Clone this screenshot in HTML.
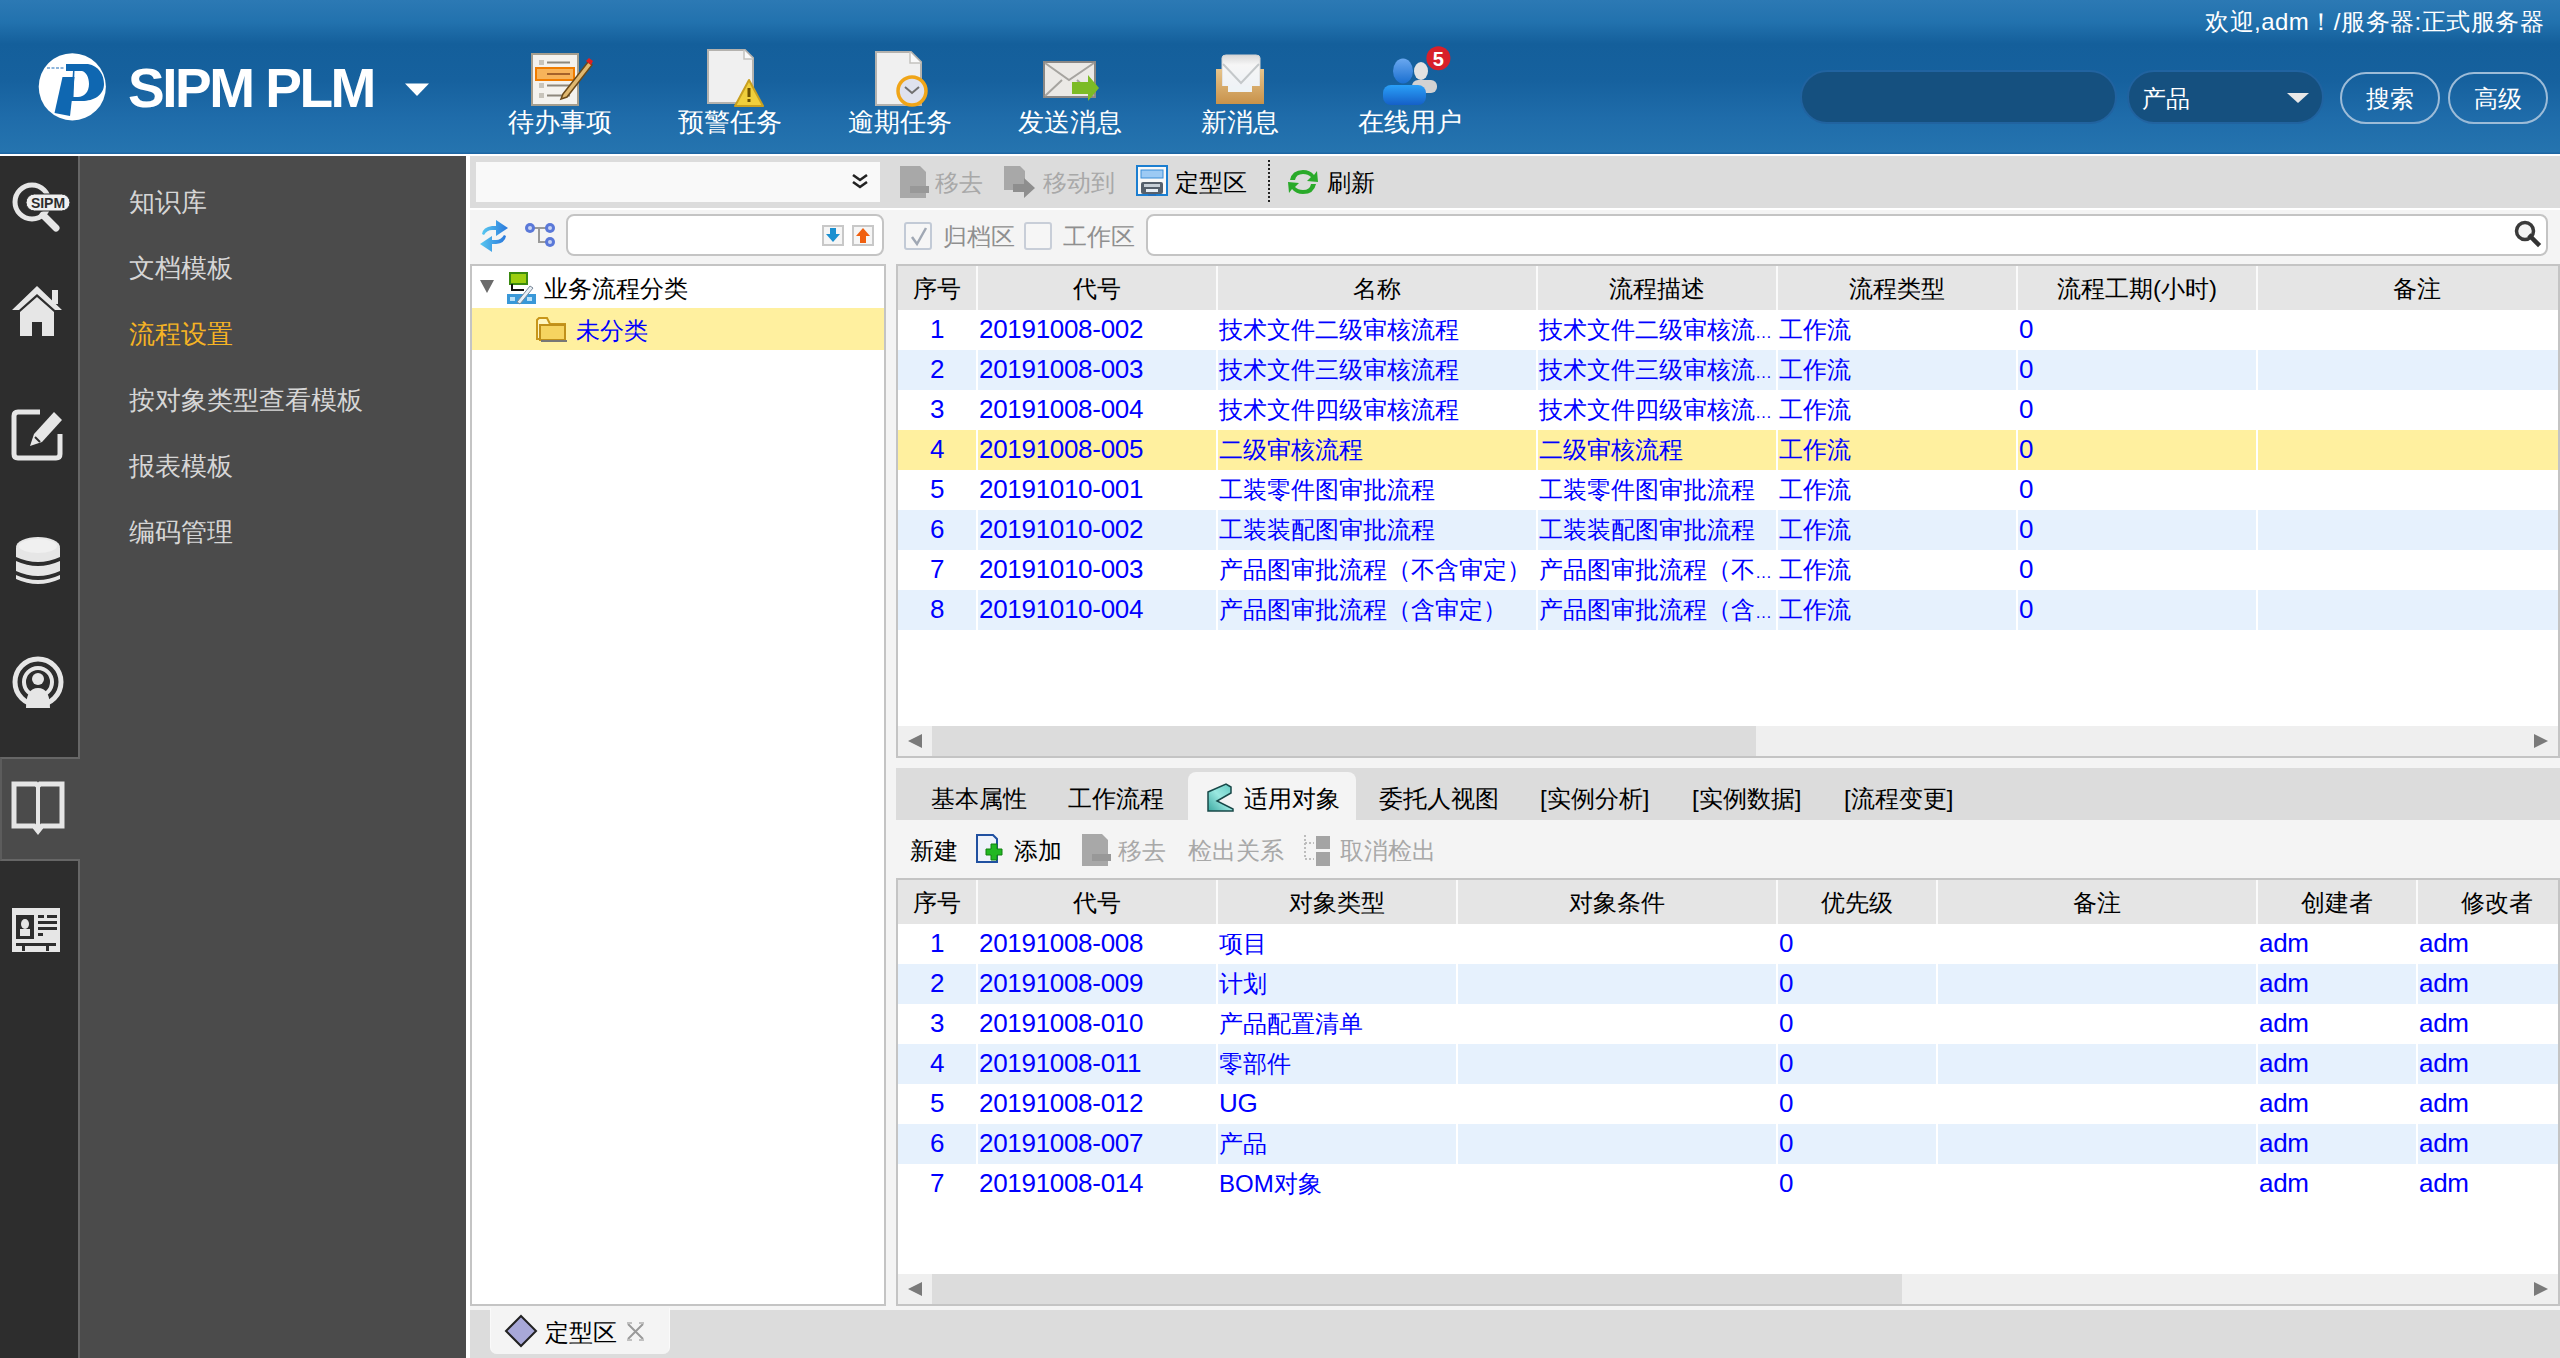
<!DOCTYPE html><html><head><meta charset="utf-8"><style>
*{box-sizing:border-box;margin:0;padding:0}
html,body{width:2560px;height:1358px;overflow:hidden}
body{position:relative;font-family:"Liberation Sans",sans-serif;background:#dcdcdc;color:#000}
.a{position:absolute}
.t{position:absolute;white-space:nowrap;line-height:1}
svg{position:absolute;overflow:visible}
.hl{color:#fff;font-size:26px}
.mi{color:#d6d6d6;font-size:26px}
.bl{color:#0000ff;font-size:24px}
.dg{color:#0000ff;font-size:26px;letter-spacing:-0.3px}
.ell{font-size:17px;letter-spacing:0}
.hd{color:#000;font-size:24px}
.gray{color:#8f8f8f;font-size:24px}
.gray2{color:#a8a8a8;font-size:24px}
.blk{color:#000;font-size:24px}
</style></head><body>
<div class="a" style="left:0px;top:0px;width:2560px;height:154px;background:linear-gradient(to bottom,#2c79b4 0px,#2272ae 22px,#145f9b 44px,#16619e 80px,#1f6caa 118px,#2574af 152px,#1d66a3 153px,#1d66a3 154px)"></div>
<div class="a" style="left:0px;top:154px;width:2560px;height:2px;background:#fff"></div>
<svg style="left:36px;top:50px" width="74" height="74" viewBox="0 0 74 74">
<circle cx="36.3" cy="36.8" r="33.6" fill="#fff"/>
<path fill-rule="evenodd" fill="#0f67b1" d="M30 14 L52 14 C63 16 68 25 68 34 C68 45 58 51 46 51 L35 51 L37 21 L30 21 Z M38.5 21 L46 21 C50 22 53 27 53 34 C53 42 48 47 42 47 L37.5 47 Z"/>
<path fill="#0f67b1" d="M26.5 27 L38.5 27 L34 66 L18.5 63 Z"/>
<path d="M11 18 L28 18" stroke="#8fb6dc" stroke-width="2" stroke-dasharray="3 1.5"/>
</svg>
<div class="t " style="left:128px;top:61px;color:#fff;font-size:55px;font-weight:bold;letter-spacing:-2.5px">SIPM PLM</div>
<svg style="left:404px;top:83px" width="26" height="14" viewBox="0 0 26 14"><path d="M1 0.5 L25 0.5 L13 13 Z" fill="#fff"/></svg>
<div class="t " style="left:2205px;top:10px;color:#fff;font-size:24px;letter-spacing:0.5px">欢迎,adm！/服务器:正式服务器</div>
<div class="t hl" style="left:508px;top:109px;">待办事项</div>
<div class="t hl" style="left:678px;top:109px;">预警任务</div>
<div class="t hl" style="left:848px;top:109px;">逾期任务</div>
<div class="t hl" style="left:1018px;top:109px;">发送消息</div>
<div class="t hl" style="left:1201px;top:109px;">新消息</div>
<div class="t hl" style="left:1358px;top:109px;">在线用户</div>
<svg style="left:530px;top:52px" width="66" height="56" viewBox="0 0 66 56">
<rect x="2" y="2" width="46" height="51" fill="#f4f2ee" stroke="#a59e8e" stroke-width="2"/>
<g fill="#c8c4bb"><rect x="9" y="8" width="5" height="5"/><rect x="9" y="31" width="5" height="5"/><rect x="9" y="41" width="5" height="5"/></g>
<g stroke="#8d877c" stroke-width="2"><line x1="17" y1="10.5" x2="40" y2="10.5"/><line x1="17" y1="33.5" x2="40" y2="33.5"/><line x1="17" y1="43.5" x2="40" y2="43.5"/></g>
<rect x="6" y="16" width="38" height="12" fill="#f7b35a" stroke="#f07c00" stroke-width="2"/>
<line x1="17" y1="22" x2="40" y2="22" stroke="#a5622a" stroke-width="2"/>
<path d="M33 42 L58 10 L62 13 L37 45 L31 47 Z" fill="#e0b870" stroke="#6b4a1a" stroke-width="1.5"/>
<path d="M56 9 L59 6 L63 9 L61 13 Z" fill="#e02020"/>
</svg>
<svg style="left:706px;top:48px" width="60" height="62" viewBox="0 0 60 62">
<path d="M2 2 L39 2 L47 10 L47 55 L2 55 Z" fill="#f0f0f0" stroke="#b4b2ae" stroke-width="2"/>
<path d="M38 2 L38 11 L47 11" fill="#fafafa" stroke="#c4c2be" stroke-width="1.5"/>
<path d="M43 32 L57 58 L29 58 Z" fill="#f0cf3c" stroke="#c9a020" stroke-width="2" stroke-linejoin="round"/>
<rect x="41.5" y="40" width="3" height="9" fill="#6b5000"/><rect x="41.5" y="51" width="3" height="3" fill="#6b5000"/>
</svg>
<svg style="left:874px;top:50px" width="56" height="60" viewBox="0 0 56 60">
<path d="M2 2 L37 2 L47 12 L47 55 L2 55 Z" fill="#f0f0f0" stroke="#b4b2ae" stroke-width="2"/>
<path d="M36 2 L36 13 L47 13" fill="#fafafa" stroke="#c4c2be" stroke-width="1.5"/>
<circle cx="38" cy="41" r="14" fill="#dfe2ee" stroke="#f0a518" stroke-width="3.5"/>
<path d="M31 37 L38 43 L45 37" fill="none" stroke="#707070" stroke-width="2"/>
</svg>
<svg style="left:1042px;top:60px" width="60" height="48" viewBox="0 0 60 48">
<rect x="2" y="2" width="51" height="35" fill="#ebe9e6" stroke="#8a8886" stroke-width="2"/>
<path d="M3 3 L27 20 L52 3 M3 36 L20 20 M52 36 L35 20" fill="none" stroke="#a6a4a0" stroke-width="2"/>
<path d="M30 22 L46 22 L46 15 L57 28 L46 41 L46 34 L30 34 Z" fill="#7cbb26"/>
</svg>
<svg style="left:1214px;top:54px" width="52" height="52" viewBox="0 0 52 52">
<defs><linearGradient id="ib" x1="0" y1="0" x2="0" y2="1"><stop offset="0" stop-color="#e6c48c"/><stop offset="1" stop-color="#c8924a"/></linearGradient>
<linearGradient id="ie" x1="0" y1="0" x2="0" y2="1"><stop offset="0" stop-color="#d8d8d8"/><stop offset="0.3" stop-color="#f6f6f6"/><stop offset="1" stop-color="#eef2f6"/></linearGradient></defs>
<path d="M8 4 Q8 1 12 1 L42 1 Q46 1 46 4 L46 34 L8 34 Z" fill="url(#ie)" stroke="#d4d4d4" stroke-width="1"/>
<path d="M9 10 L27 29 L45 10" fill="none" stroke="#c4c8ca" stroke-width="2"/>
<path d="M2 15 L2 50 L50 50 L50 15 L46 15 L46 32 L38 32 L38 38 L14 38 L14 32 L8 32 L8 15 Z" fill="url(#ib)"/>
<rect x="14" y="32" width="24" height="6" fill="#eef3f6"/>
</svg>
<svg style="left:1380px;top:44px" width="74" height="66" viewBox="0 0 74 66">
<ellipse cx="41" cy="27" rx="7" ry="9" fill="#e2e2e2"/>
<rect x="32" y="36" width="25" height="13" rx="6" fill="#d2d2d2"/>
<defs><linearGradient id="ug" x1="0" y1="0" x2="0" y2="1"><stop offset="0" stop-color="#6aa8f0"/><stop offset="1" stop-color="#1a6fd0"/></linearGradient>
<linearGradient id="ub" x1="0" y1="0" x2="0" y2="1"><stop offset="0" stop-color="#2aa0f8"/><stop offset="1" stop-color="#1560c8"/></linearGradient></defs>
<ellipse cx="23" cy="27" rx="10" ry="12.5" fill="url(#ug)"/>
<rect x="3" y="41" width="43" height="20" rx="8" fill="url(#ub)"/>
<circle cx="58.4" cy="14.2" r="12" fill="#d8202a"/>
<text x="58.4" y="22" font-family="Liberation Sans" font-size="20" font-weight="bold" fill="#fff" text-anchor="middle">5</text>
</svg>
<div class="a" style="left:1800px;top:70px;width:317px;height:54px;background:#15507f;border:2px solid #2163a0;border-radius:27px"></div>
<div class="a" style="left:2127px;top:70px;width:197px;height:54px;background:#15507f;border:2px solid #2163a0;border-radius:27px"></div>
<div class="t hl" style="left:2142px;top:87px;font-size:24px">产品</div>
<svg style="left:2286px;top:92px" width="24" height="12" viewBox="0 0 24 12"><path d="M1 1 L23 1 L12 11 Z" fill="#e8e8e8"/></svg>
<div class="a" style="left:2340px;top:72px;width:100px;height:52px;border:2px solid #9dbcd8;border-radius:26px"></div>
<div class="a" style="left:2448px;top:72px;width:100px;height:52px;border:2px solid #9dbcd8;border-radius:26px"></div>
<div class="t hl" style="left:2366px;top:87px;font-size:24px">搜索</div>
<div class="t hl" style="left:2474px;top:87px;font-size:24px">高级</div>
<div class="a" style="left:0px;top:156px;width:78px;height:1202px;background:#2d2d2d"></div>
<div class="a" style="left:78px;top:156px;width:2px;height:1202px;background:#666"></div>
<div class="a" style="left:80px;top:156px;width:386px;height:1202px;background:#4b4b4b"></div>
<div class="a" style="left:466px;top:156px;width:4px;height:1202px;background:#fff"></div>
<div class="a" style="left:0px;top:757px;width:80px;height:104px;background:#4b4b4b;border-top:2px solid #666;border-bottom:2px solid #666;border-left:2px solid #5c5c5c"></div>
<svg style="left:8px;top:180px" width="64" height="56" viewBox="0 0 64 56">
<circle cx="24" cy="22" r="17" fill="none" stroke="#e6e6e6" stroke-width="5"/>
<path d="M35 35 L48 48" stroke="#e6e6e6" stroke-width="7" stroke-linecap="round"/>
<rect x="18" y="14" width="44" height="17" rx="8.5" fill="#f0f0f0" stroke="#2d2d2d" stroke-width="1"/>
<text x="40" y="28" font-family="Liberation Sans" font-size="14" font-weight="bold" fill="#2d2d2d" text-anchor="middle">SIPM</text>
</svg>
<svg style="left:10px;top:282px" width="54" height="58" viewBox="0 0 54 58">
<path d="M27 4 L52 28 L45 28 L27 12 L9 28 L2 28 Z" fill="#e6e6e6"/>
<rect x="42" y="8" width="6" height="14" fill="#e6e6e6"/>
<path d="M10 30 L27 15 L44 30 L44 54 L32 54 L32 40 L22 40 L22 54 L10 54 Z" fill="#e6e6e6"/>
</svg>
<svg style="left:10px;top:404px" width="56" height="60" viewBox="0 0 56 60">
<path d="M30 8 L8 8 Q4 8 4 12 L4 50 Q4 54 8 54 L46 54 Q50 54 50 50 L50 30" fill="none" stroke="#e6e6e6" stroke-width="5"/>
<path d="M20 42 L24 30 L44 8 L52 16 L32 38 Z" fill="#e6e6e6"/>
<path d="M25 33 L30 38" stroke="#2d2d2d" stroke-width="2"/>
</svg>
<svg style="left:14px;top:535px" width="50" height="52" viewBox="0 0 50 52">
<path d="M2 13 L2 22 Q24 32 46 22 L46 13 Z" fill="#e6e6e6"/>
<ellipse cx="24" cy="12" rx="22" ry="10" fill="#e6e6e6"/>
<ellipse cx="24" cy="11" rx="19" ry="7" fill="#f0f0f0"/>
<path d="M2 26 Q24 36 46 26 L46 36 Q24 46 2 36 Z" fill="#e6e6e6"/>
<path d="M2 40 Q24 50 46 40 L46 44 Q24 54 2 44 Z" fill="#e6e6e6"/>
</svg>
<svg style="left:10px;top:654px" width="56" height="58" viewBox="0 0 56 58">
<circle cx="28" cy="28" r="23" fill="none" stroke="#e6e6e6" stroke-width="5"/>
<circle cx="28" cy="28" r="14" fill="none" stroke="#e6e6e6" stroke-width="4"/>
<circle cx="28" cy="25" r="6" fill="#e6e6e6"/>
<path d="M16 54 Q16 34 28 34 Q40 34 40 54 Z" fill="#e6e6e6"/>
</svg>
<svg style="left:10px;top:780px" width="56" height="56" viewBox="0 0 56 56">
<path d="M4 4 L26 4 L28 6 L30 4 L52 4 L52 46 L32 46 L28 51 L24 46 L4 46 Z" fill="none" stroke="#e6e6e6" stroke-width="5" stroke-linejoin="miter"/>
<line x1="28" y1="5" x2="28" y2="48" stroke="#e6e6e6" stroke-width="4"/>
</svg>
<svg style="left:10px;top:906px" width="54" height="48" viewBox="0 0 54 48">
<rect x="2" y="2" width="48" height="44" fill="#e6e6e6"/>
<rect x="6" y="9" width="18" height="24" fill="#2d2d2d"/>
<ellipse cx="15" cy="18" rx="4" ry="5" fill="#e6e6e6"/><rect x="10" y="23" width="10" height="7" fill="#e6e6e6"/>
<g fill="#2d2d2d"><rect x="28" y="9" width="6" height="3"/><rect x="37" y="9" width="10" height="3"/><rect x="28" y="15" width="19" height="3"/><rect x="28" y="21" width="19" height="3"/><rect x="28" y="27" width="5" height="3"/></g>
<rect x="6" y="37" width="40" height="3" fill="#2d2d2d"/>
<rect x="12" y="40" width="3" height="5" fill="#2d2d2d"/><rect x="36" y="40" width="3" height="5" fill="#2d2d2d"/>
</svg>
<div class="t mi" style="left:129px;top:189px;">知识库</div>
<div class="t mi" style="left:129px;top:255px;">文档模板</div>
<div class="t mi" style="left:129px;top:321px;color:#f5b324">流程设置</div>
<div class="t mi" style="left:129px;top:387px;">按对象类型查看模板</div>
<div class="t mi" style="left:129px;top:453px;">报表模板</div>
<div class="t mi" style="left:129px;top:519px;">编码管理</div>
<div class="a" style="left:470px;top:156px;width:2090px;height:52px;background:#dcdcdc"></div>
<div class="a" style="left:476px;top:162px;width:404px;height:40px;background:#f9f9f9"></div>
<svg style="left:850px;top:172px" width="20" height="20" viewBox="0 0 20 20"><path d="M3 3 L10 8 L17 3 M3 10 L10 15 L17 10" fill="none" stroke="#222" stroke-width="2.6"/></svg>
<div class="a" style="left:470px;top:208px;width:2090px;height:2px;background:#fff"></div>
<svg style="left:900px;top:166px" width="30" height="34" viewBox="0 0 30 34">
<path d="M0 0 L20 0 L26 6 L26 32 L0 32 Z" fill="#a8a8a8"/>
<rect x="10" y="20" width="19" height="7" fill="#989898"/>
</svg>
<div class="t gray2" style="left:935px;top:171px;">移去</div>
<svg style="left:1004px;top:166px" width="32" height="34" viewBox="0 0 32 34">
<path d="M0 0 L16 0 L21 5 L21 24 L0 24 Z" fill="#a8a8a8"/>
<path d="M9 18 L20 18 L20 12 L31 22 L20 32 L20 26 L9 26 Z" fill="#8e8e8e"/>
</svg>
<div class="t gray2" style="left:1043px;top:171px;">移动到</div>
<svg style="left:1136px;top:165px" width="32" height="32" viewBox="0 0 32 32">
<rect x="1" y="1" width="30" height="29" fill="#f8f8f8" stroke="#1b7ed0" stroke-width="2"/>
<rect x="5" y="5" width="22" height="8" fill="#9ccaf4" stroke="#3a8ed8" stroke-width="1"/>
<rect x="5" y="17" width="22" height="12" rx="2" fill="#56606c"/>
<rect x="8" y="19" width="16" height="3" fill="#c8d0d8"/>
<rect x="10" y="24" width="12" height="3" fill="#e8eef4"/>
<rect x="12" y="29" width="8" height="2" fill="#2070c0"/>
</svg>
<div class="t blk" style="left:1175px;top:171px;">定型区</div>
<svg style="left:1268px;top:160px" width="2" height="46" viewBox="0 0 2 46"><g fill="#222"><rect x="0" y="0" width="2" height="2"/><rect x="0" y="4" width="2" height="2"/><rect x="0" y="8" width="2" height="2"/><rect x="0" y="12" width="2" height="2"/><rect x="0" y="16" width="2" height="2"/><rect x="0" y="20" width="2" height="2"/><rect x="0" y="24" width="2" height="2"/><rect x="0" y="28" width="2" height="2"/><rect x="0" y="32" width="2" height="2"/><rect x="0" y="36" width="2" height="2"/><rect x="0" y="40" width="2" height="2"/></g></svg>
<svg style="left:1286px;top:166px" width="34" height="32" viewBox="0 0 34 32">
<path d="M4 14 Q6 4 17 4 Q24 4 28 9 L31 5 L32 16 L21 15 L25 11 Q22 8 17 8 Q10 8 9 14 Z" fill="#2aaa2a"/>
<path d="M30 18 Q28 28 17 28 Q10 28 6 23 L3 27 L2 16 L13 17 L9 21 Q12 24 17 24 Q24 24 25 18 Z" fill="#2aaa2a"/>
</svg>
<div class="t blk" style="left:1327px;top:171px;">刷新</div>
<div class="a" style="left:470px;top:210px;width:2090px;height:54px;background:#f4f4f4"></div>
<svg style="left:478px;top:218px" width="34" height="36" viewBox="0 0 34 36">
<defs><linearGradient id="rg" x1="0" x2="1"><stop offset="0" stop-color="#58c8f0"/><stop offset="1" stop-color="#2a78dc"/></linearGradient></defs>
<path d="M4 16 Q5 9 14 8 L18 8 L18 2 L30 10 L18 18 L18 12 L14 12 Q9 12 6 17 Z" fill="url(#rg)"/>
<path d="M28 18 Q27 25 18 26 L14 26 L14 34 L2 26 L14 18 L14 22 L18 22 Q23 22 26 17 Z" fill="url(#rg)"/>
</svg>
<svg style="left:524px;top:222px" width="34" height="32" viewBox="0 0 34 32">
<line x1="6" y1="6" x2="26" y2="6" stroke="#9a9a9a" stroke-width="2"/>
<path d="M15 6 L15 20 L26 20" fill="none" stroke="#9a9a9a" stroke-width="2"/>
<circle cx="6" cy="6" r="5" fill="#5a78d8"/><circle cx="26" cy="6" r="5" fill="#5a78d8"/><circle cx="26" cy="20" r="5" fill="#5a78d8"/>
<circle cx="6" cy="6" r="2" fill="#c8d4f4"/><circle cx="26" cy="6" r="2" fill="#c8d4f4"/><circle cx="26" cy="20" r="2" fill="#c8d4f4"/>
</svg>
<div class="a" style="left:566px;top:214px;width:318px;height:42px;background:#fff;border:2px solid #c4c4c4;border-radius:8px"></div>
<div class="a" style="left:822px;top:225px;width:22px;height:21px;background:#f6f6f6;border:2px solid #c8c8c8"></div>
<svg style="left:826px;top:228px" width="14" height="15" viewBox="0 0 14 15"><path d="M4 0 L10 0 L10 6 L14 6 L7 14 L0 6 L4 6 Z" fill="#1a90d0"/></svg>
<div class="a" style="left:852px;top:225px;width:22px;height:21px;background:#f6f6f6;border:2px solid #c8c8c8"></div>
<svg style="left:856px;top:228px" width="14" height="15" viewBox="0 0 14 15"><path d="M4 15 L10 15 L10 8 L14 8 L7 0 L0 8 L4 8 Z" fill="#f06010"/></svg>
<div class="a" style="left:904px;top:222px;width:28px;height:28px;background:#f6f6f6;border:2px solid #c2cad6;border-radius:3px"></div>
<svg style="left:907px;top:225px" width="22" height="22" viewBox="0 0 22 22"><path d="M5 12 L10 19 L19 3" fill="none" stroke="#a0a8b4" stroke-width="2.5"/></svg>
<div class="t gray" style="left:943px;top:225px;">归档区</div>
<div class="a" style="left:1024px;top:222px;width:28px;height:28px;background:#f6f6f6;border:2px solid #c8ced8;border-radius:3px"></div>
<div class="t gray" style="left:1063px;top:225px;">工作区</div>
<div class="a" style="left:1146px;top:214px;width:1402px;height:42px;background:#fff;border:2px solid #c4c4c4;border-radius:8px"></div>
<svg style="left:2510px;top:220px" width="32" height="32" viewBox="0 0 32 32"><circle cx="15" cy="11" r="8.5" fill="#f4f4f4" stroke="#3a3a3a" stroke-width="3.5"/><path d="M20.5 16.5 L28 24" stroke="#333" stroke-width="4.5" stroke-linecap="square"/></svg>
<div class="a" style="left:886px;top:264px;width:10px;height:1042px;background:#f4f4f4"></div>
<div class="a" style="left:470px;top:264px;width:416px;height:1042px;background:#fff;border:2px solid #c4c4c4"></div>
<svg style="left:480px;top:280px" width="14" height="14" viewBox="0 0 14 14"><path d="M0 0 L14 0 L7 13 Z" fill="#6b6b6b"/></svg>
<svg style="left:506px;top:272px" width="30" height="32" viewBox="0 0 30 32">
<rect x="4" y="1" width="17" height="11" fill="#9cce10" stroke="#3a8a10" stroke-width="2"/>
<path d="M6 12 L6 18 L18 18" fill="none" stroke="#111" stroke-width="2"/>
<rect x="1" y="22" width="29" height="10" fill="#3a98d8"/>
<rect x="4" y="25" width="5" height="4" fill="#b8e0f8"/><rect x="21" y="25" width="5" height="4" fill="#b8e0f8"/>
<path d="M11 30 L24 14 L27 16 L14 32 Z" fill="#e8eef4" stroke="#7a8898" stroke-width="1"/>
</svg>
<div class="t blk" style="left:544px;top:277px;">业务流程分类</div>
<div class="a" style="left:472px;top:308px;width:412px;height:42px;background:#fff09f"></div>
<svg style="left:536px;top:316px" width="32" height="26" viewBox="0 0 32 26">
<path d="M1 4 L1 23 L29 23 L29 8 L14 8 L11 2 L3 2 Z" fill="#fff6c0" stroke="#c8961a" stroke-width="2"/>
<rect x="4" y="9" width="25" height="15" fill="#f6d460" stroke="#c0901a" stroke-width="2"/>
<rect x="5" y="24" width="26" height="2" fill="#777"/>
</svg>
<div class="t bl" style="left:576px;top:319px;">未分类</div>
<div class="a" style="left:896px;top:264px;width:1664px;height:494px;background:#fff;border:2px solid #c4c4c4"></div>
<div class="a" style="left:898px;top:266px;width:1660px;height:44px;background:#e5e5e5"></div>
<div class="a" style="left:976px;top:266px;width:2px;height:44px;background:#fafafa"></div>
<div class="a" style="left:1216px;top:266px;width:2px;height:44px;background:#fafafa"></div>
<div class="a" style="left:1536px;top:266px;width:2px;height:44px;background:#fafafa"></div>
<div class="a" style="left:1776px;top:266px;width:2px;height:44px;background:#fafafa"></div>
<div class="a" style="left:2016px;top:266px;width:2px;height:44px;background:#fafafa"></div>
<div class="a" style="left:2256px;top:266px;width:2px;height:44px;background:#fafafa"></div>
<div class="t hd" style="left:898px;top:277px;width:78px;text-align:center">序号</div>
<div class="t hd" style="left:978px;top:277px;width:238px;text-align:center">代号</div>
<div class="t hd" style="left:1218px;top:277px;width:318px;text-align:center">名称</div>
<div class="t hd" style="left:1538px;top:277px;width:238px;text-align:center">流程描述</div>
<div class="t hd" style="left:1778px;top:277px;width:238px;text-align:center">流程类型</div>
<div class="t hd" style="left:2018px;top:277px;width:238px;text-align:center">流程工期(小时)</div>
<div class="t hd" style="left:2258px;top:277px;width:318px;text-align:center">备注</div>
<div class="a" style="left:898px;top:350px;width:1660px;height:40px;background:#e6f1fd"></div>
<div class="a" style="left:976px;top:350px;width:2px;height:40px;background:#fff"></div>
<div class="a" style="left:1216px;top:350px;width:2px;height:40px;background:#fff"></div>
<div class="a" style="left:1536px;top:350px;width:2px;height:40px;background:#fff"></div>
<div class="a" style="left:1776px;top:350px;width:2px;height:40px;background:#fff"></div>
<div class="a" style="left:2016px;top:350px;width:2px;height:40px;background:#fff"></div>
<div class="a" style="left:2256px;top:350px;width:2px;height:40px;background:#fff"></div>
<div class="a" style="left:898px;top:430px;width:1660px;height:40px;background:#fff09f"></div>
<div class="a" style="left:976px;top:430px;width:2px;height:40px;background:#fff"></div>
<div class="a" style="left:1216px;top:430px;width:2px;height:40px;background:#fff"></div>
<div class="a" style="left:1536px;top:430px;width:2px;height:40px;background:#fff"></div>
<div class="a" style="left:1776px;top:430px;width:2px;height:40px;background:#fff"></div>
<div class="a" style="left:2016px;top:430px;width:2px;height:40px;background:#fff"></div>
<div class="a" style="left:2256px;top:430px;width:2px;height:40px;background:#fff"></div>
<div class="a" style="left:898px;top:510px;width:1660px;height:40px;background:#e6f1fd"></div>
<div class="a" style="left:976px;top:510px;width:2px;height:40px;background:#fff"></div>
<div class="a" style="left:1216px;top:510px;width:2px;height:40px;background:#fff"></div>
<div class="a" style="left:1536px;top:510px;width:2px;height:40px;background:#fff"></div>
<div class="a" style="left:1776px;top:510px;width:2px;height:40px;background:#fff"></div>
<div class="a" style="left:2016px;top:510px;width:2px;height:40px;background:#fff"></div>
<div class="a" style="left:2256px;top:510px;width:2px;height:40px;background:#fff"></div>
<div class="a" style="left:898px;top:590px;width:1660px;height:40px;background:#e6f1fd"></div>
<div class="a" style="left:976px;top:590px;width:2px;height:40px;background:#fff"></div>
<div class="a" style="left:1216px;top:590px;width:2px;height:40px;background:#fff"></div>
<div class="a" style="left:1536px;top:590px;width:2px;height:40px;background:#fff"></div>
<div class="a" style="left:1776px;top:590px;width:2px;height:40px;background:#fff"></div>
<div class="a" style="left:2016px;top:590px;width:2px;height:40px;background:#fff"></div>
<div class="a" style="left:2256px;top:590px;width:2px;height:40px;background:#fff"></div>
<div class="t dg" style="left:898px;top:316px;width:78px;text-align:center">1</div>
<div class="t dg" style="left:979px;top:316px;">20191008-002</div>
<div class="t bl" style="left:1219px;top:318px;">技术文件二级审核流程</div>
<div class="t bl" style="left:1539px;top:318px;">技术文件二级审核流<span class="ell">…</span></div>
<div class="t bl" style="left:1779px;top:318px;">工作流</div>
<div class="t dg" style="left:2019px;top:316px;">0</div>
<div class="t dg" style="left:898px;top:356px;width:78px;text-align:center">2</div>
<div class="t dg" style="left:979px;top:356px;">20191008-003</div>
<div class="t bl" style="left:1219px;top:358px;">技术文件三级审核流程</div>
<div class="t bl" style="left:1539px;top:358px;">技术文件三级审核流<span class="ell">…</span></div>
<div class="t bl" style="left:1779px;top:358px;">工作流</div>
<div class="t dg" style="left:2019px;top:356px;">0</div>
<div class="t dg" style="left:898px;top:396px;width:78px;text-align:center">3</div>
<div class="t dg" style="left:979px;top:396px;">20191008-004</div>
<div class="t bl" style="left:1219px;top:398px;">技术文件四级审核流程</div>
<div class="t bl" style="left:1539px;top:398px;">技术文件四级审核流<span class="ell">…</span></div>
<div class="t bl" style="left:1779px;top:398px;">工作流</div>
<div class="t dg" style="left:2019px;top:396px;">0</div>
<div class="t dg" style="left:898px;top:436px;width:78px;text-align:center">4</div>
<div class="t dg" style="left:979px;top:436px;">20191008-005</div>
<div class="t bl" style="left:1219px;top:438px;">二级审核流程</div>
<div class="t bl" style="left:1539px;top:438px;">二级审核流程</div>
<div class="t bl" style="left:1779px;top:438px;">工作流</div>
<div class="t dg" style="left:2019px;top:436px;">0</div>
<div class="t dg" style="left:898px;top:476px;width:78px;text-align:center">5</div>
<div class="t dg" style="left:979px;top:476px;">20191010-001</div>
<div class="t bl" style="left:1219px;top:478px;">工装零件图审批流程</div>
<div class="t bl" style="left:1539px;top:478px;">工装零件图审批流程</div>
<div class="t bl" style="left:1779px;top:478px;">工作流</div>
<div class="t dg" style="left:2019px;top:476px;">0</div>
<div class="t dg" style="left:898px;top:516px;width:78px;text-align:center">6</div>
<div class="t dg" style="left:979px;top:516px;">20191010-002</div>
<div class="t bl" style="left:1219px;top:518px;">工装装配图审批流程</div>
<div class="t bl" style="left:1539px;top:518px;">工装装配图审批流程</div>
<div class="t bl" style="left:1779px;top:518px;">工作流</div>
<div class="t dg" style="left:2019px;top:516px;">0</div>
<div class="t dg" style="left:898px;top:556px;width:78px;text-align:center">7</div>
<div class="t dg" style="left:979px;top:556px;">20191010-003</div>
<div class="t bl" style="left:1219px;top:558px;">产品图审批流程（不含审定）</div>
<div class="t bl" style="left:1539px;top:558px;">产品图审批流程（不<span class="ell">…</span></div>
<div class="t bl" style="left:1779px;top:558px;">工作流</div>
<div class="t dg" style="left:2019px;top:556px;">0</div>
<div class="t dg" style="left:898px;top:596px;width:78px;text-align:center">8</div>
<div class="t dg" style="left:979px;top:596px;">20191010-004</div>
<div class="t bl" style="left:1219px;top:598px;">产品图审批流程（含审定）</div>
<div class="t bl" style="left:1539px;top:598px;">产品图审批流程（含<span class="ell">…</span></div>
<div class="t bl" style="left:1779px;top:598px;">工作流</div>
<div class="t dg" style="left:2019px;top:596px;">0</div>
<div class="a" style="left:898px;top:726px;width:1660px;height:30px;background:#efefef"></div>
<div class="a" style="left:932px;top:726px;width:824px;height:30px;background:#dcdcdc"></div>
<svg style="left:908px;top:734px" width="14" height="14" viewBox="0 0 14 14"><path d="M14 0 L14 14 L0 7 Z" fill="#7a7a7a"/></svg>
<svg style="left:2534px;top:734px" width="14" height="14" viewBox="0 0 14 14"><path d="M0 0 L0 14 L14 7 Z" fill="#7a7a7a"/></svg>
<div class="a" style="left:896px;top:758px;width:1664px;height:10px;background:#f4f4f4"></div>
<div class="a" style="left:896px;top:768px;width:1664px;height:52px;background:#dcdcdc"></div>
<div class="a" style="left:1188px;top:772px;width:168px;height:48px;background:#f4f4f4;border-radius:8px 8px 0 0"></div>
<div class="t blk" style="left:931px;top:787px;">基本属性</div>
<div class="t blk" style="left:1068px;top:787px;">工作流程</div>
<div class="t blk" style="left:1244px;top:787px;">适用对象</div>
<div class="t blk" style="left:1379px;top:787px;">委托人视图</div>
<div class="t blk" style="left:1540px;top:787px;">[实例分析]</div>
<div class="t blk" style="left:1692px;top:787px;">[实例数据]</div>
<div class="t blk" style="left:1844px;top:787px;">[流程变更]</div>
<svg style="left:1206px;top:782px" width="30" height="32" viewBox="0 0 30 32">
<defs><linearGradient id="tg" x1="0" y1="1" x2="1" y2="0"><stop offset="0" stop-color="#3aa8a0"/><stop offset="0.5" stop-color="#9ae8e0"/><stop offset="1" stop-color="#60c8c0"/></linearGradient></defs>
<path d="M2 10 L20 2 L25 5 L25 11 L11 19 L27 27 L27 29 L2 29 Z" fill="url(#tg)" stroke="#184848" stroke-width="1.5"/>
</svg>
<div class="a" style="left:896px;top:820px;width:1664px;height:58px;background:#f4f4f4"></div>
<div class="t blk" style="left:910px;top:839px;">新建</div>
<svg style="left:976px;top:834px" width="30" height="30" viewBox="0 0 30 30">
<path d="M1 1 L17 1 L21 5 L21 28 L1 28 Z" fill="#eef2fa" stroke="#2050a0" stroke-width="2"/>
<path d="M15 10 L21 10 L21 15 L26 15 L26 21 L21 21 L21 26 L15 26 L15 21 L10 21 L10 15 L15 15 Z" fill="#22b822" stroke="#108010" stroke-width="1"/>
</svg>
<div class="t blk" style="left:1014px;top:839px;">添加</div>
<svg style="left:1082px;top:834px" width="30" height="34" viewBox="0 0 30 34">
<path d="M0 0 L20 0 L26 6 L26 32 L0 32 Z" fill="#a8a8a8"/>
<rect x="10" y="20" width="19" height="7" fill="#989898"/>
</svg>
<div class="t gray2" style="left:1118px;top:839px;">移去</div>
<div class="t gray2" style="left:1188px;top:839px;">检出关系</div>
<svg style="left:1304px;top:834px" width="28" height="34" viewBox="0 0 28 34">
<path d="M1 1 L1 25 M1 9 L10 9 M1 25 L10 25" fill="none" stroke="#bdbdbd" stroke-width="2" stroke-dasharray="2 2"/>
<rect x="12" y="2" width="14" height="13" fill="#a4a4a4"/>
<rect x="12" y="18" width="14" height="14" fill="#a4a4a4"/>
</svg>
<div class="t gray2" style="left:1340px;top:839px;">取消检出</div>
<div class="a" style="left:896px;top:878px;width:1664px;height:428px;background:#fff;border:2px solid #c4c4c4"></div>
<div class="a" style="left:898px;top:880px;width:1660px;height:44px;background:#e5e5e5"></div>
<div class="a" style="left:976px;top:880px;width:2px;height:44px;background:#fafafa"></div>
<div class="a" style="left:1216px;top:880px;width:2px;height:44px;background:#fafafa"></div>
<div class="a" style="left:1456px;top:880px;width:2px;height:44px;background:#fafafa"></div>
<div class="a" style="left:1776px;top:880px;width:2px;height:44px;background:#fafafa"></div>
<div class="a" style="left:1936px;top:880px;width:2px;height:44px;background:#fafafa"></div>
<div class="a" style="left:2256px;top:880px;width:2px;height:44px;background:#fafafa"></div>
<div class="a" style="left:2416px;top:880px;width:2px;height:44px;background:#fafafa"></div>
<div class="t hd" style="left:898px;top:891px;width:78px;text-align:center">序号</div>
<div class="t hd" style="left:978px;top:891px;width:238px;text-align:center">代号</div>
<div class="t hd" style="left:1218px;top:891px;width:238px;text-align:center">对象类型</div>
<div class="t hd" style="left:1458px;top:891px;width:318px;text-align:center">对象条件</div>
<div class="t hd" style="left:1778px;top:891px;width:158px;text-align:center">优先级</div>
<div class="t hd" style="left:1938px;top:891px;width:318px;text-align:center">备注</div>
<div class="t hd" style="left:2258px;top:891px;width:158px;text-align:center">创建者</div>
<div class="t hd" style="left:2418px;top:891px;width:158px;text-align:center">修改者</div>
<div class="a" style="left:898px;top:964px;width:1660px;height:40px;background:#e6f1fd"></div>
<div class="a" style="left:976px;top:964px;width:2px;height:40px;background:#fff"></div>
<div class="a" style="left:1216px;top:964px;width:2px;height:40px;background:#fff"></div>
<div class="a" style="left:1456px;top:964px;width:2px;height:40px;background:#fff"></div>
<div class="a" style="left:1776px;top:964px;width:2px;height:40px;background:#fff"></div>
<div class="a" style="left:1936px;top:964px;width:2px;height:40px;background:#fff"></div>
<div class="a" style="left:2256px;top:964px;width:2px;height:40px;background:#fff"></div>
<div class="a" style="left:2416px;top:964px;width:2px;height:40px;background:#fff"></div>
<div class="a" style="left:898px;top:1044px;width:1660px;height:40px;background:#e6f1fd"></div>
<div class="a" style="left:976px;top:1044px;width:2px;height:40px;background:#fff"></div>
<div class="a" style="left:1216px;top:1044px;width:2px;height:40px;background:#fff"></div>
<div class="a" style="left:1456px;top:1044px;width:2px;height:40px;background:#fff"></div>
<div class="a" style="left:1776px;top:1044px;width:2px;height:40px;background:#fff"></div>
<div class="a" style="left:1936px;top:1044px;width:2px;height:40px;background:#fff"></div>
<div class="a" style="left:2256px;top:1044px;width:2px;height:40px;background:#fff"></div>
<div class="a" style="left:2416px;top:1044px;width:2px;height:40px;background:#fff"></div>
<div class="a" style="left:898px;top:1124px;width:1660px;height:40px;background:#e6f1fd"></div>
<div class="a" style="left:976px;top:1124px;width:2px;height:40px;background:#fff"></div>
<div class="a" style="left:1216px;top:1124px;width:2px;height:40px;background:#fff"></div>
<div class="a" style="left:1456px;top:1124px;width:2px;height:40px;background:#fff"></div>
<div class="a" style="left:1776px;top:1124px;width:2px;height:40px;background:#fff"></div>
<div class="a" style="left:1936px;top:1124px;width:2px;height:40px;background:#fff"></div>
<div class="a" style="left:2256px;top:1124px;width:2px;height:40px;background:#fff"></div>
<div class="a" style="left:2416px;top:1124px;width:2px;height:40px;background:#fff"></div>
<div class="t dg" style="left:898px;top:930px;width:78px;text-align:center">1</div>
<div class="t dg" style="left:979px;top:930px;">20191008-008</div>
<div class="t bl" style="left:1219px;top:932px;">项目</div>
<div class="t dg" style="left:1779px;top:930px;">0</div>
<div class="t dg" style="left:2259px;top:930px;">adm</div>
<div class="t dg" style="left:2419px;top:930px;">adm</div>
<div class="t dg" style="left:898px;top:970px;width:78px;text-align:center">2</div>
<div class="t dg" style="left:979px;top:970px;">20191008-009</div>
<div class="t bl" style="left:1219px;top:972px;">计划</div>
<div class="t dg" style="left:1779px;top:970px;">0</div>
<div class="t dg" style="left:2259px;top:970px;">adm</div>
<div class="t dg" style="left:2419px;top:970px;">adm</div>
<div class="t dg" style="left:898px;top:1010px;width:78px;text-align:center">3</div>
<div class="t dg" style="left:979px;top:1010px;">20191008-010</div>
<div class="t bl" style="left:1219px;top:1012px;">产品配置清单</div>
<div class="t dg" style="left:1779px;top:1010px;">0</div>
<div class="t dg" style="left:2259px;top:1010px;">adm</div>
<div class="t dg" style="left:2419px;top:1010px;">adm</div>
<div class="t dg" style="left:898px;top:1050px;width:78px;text-align:center">4</div>
<div class="t dg" style="left:979px;top:1050px;">20191008-011</div>
<div class="t bl" style="left:1219px;top:1052px;">零部件</div>
<div class="t dg" style="left:1779px;top:1050px;">0</div>
<div class="t dg" style="left:2259px;top:1050px;">adm</div>
<div class="t dg" style="left:2419px;top:1050px;">adm</div>
<div class="t dg" style="left:898px;top:1090px;width:78px;text-align:center">5</div>
<div class="t dg" style="left:979px;top:1090px;">20191008-012</div>
<div class="t dg" style="left:1219px;top:1090px;">UG</div>
<div class="t dg" style="left:1779px;top:1090px;">0</div>
<div class="t dg" style="left:2259px;top:1090px;">adm</div>
<div class="t dg" style="left:2419px;top:1090px;">adm</div>
<div class="t dg" style="left:898px;top:1130px;width:78px;text-align:center">6</div>
<div class="t dg" style="left:979px;top:1130px;">20191008-007</div>
<div class="t bl" style="left:1219px;top:1132px;">产品</div>
<div class="t dg" style="left:1779px;top:1130px;">0</div>
<div class="t dg" style="left:2259px;top:1130px;">adm</div>
<div class="t dg" style="left:2419px;top:1130px;">adm</div>
<div class="t dg" style="left:898px;top:1170px;width:78px;text-align:center">7</div>
<div class="t dg" style="left:979px;top:1170px;">20191008-014</div>
<div class="t bl" style="left:1219px;top:1172px;">BOM对象</div>
<div class="t dg" style="left:1779px;top:1170px;">0</div>
<div class="t dg" style="left:2259px;top:1170px;">adm</div>
<div class="t dg" style="left:2419px;top:1170px;">adm</div>
<div class="a" style="left:898px;top:1274px;width:1660px;height:30px;background:#efefef"></div>
<div class="a" style="left:932px;top:1274px;width:970px;height:30px;background:#dcdcdc"></div>
<svg style="left:908px;top:1282px" width="14" height="14" viewBox="0 0 14 14"><path d="M14 0 L14 14 L0 7 Z" fill="#7a7a7a"/></svg>
<svg style="left:2534px;top:1282px" width="14" height="14" viewBox="0 0 14 14"><path d="M0 0 L0 14 L14 7 Z" fill="#7a7a7a"/></svg>
<div class="a" style="left:470px;top:1306px;width:2090px;height:4px;background:#f4f4f4"></div>
<div class="a" style="left:470px;top:1310px;width:2090px;height:48px;background:#dcdcdc"></div>
<div class="a" style="left:490px;top:1308px;width:180px;height:46px;background:#f4f4f4;border-radius:0 0 7px 7px;border-left:1px solid #fafafa;border-right:1px solid #fafafa"></div>
<svg style="left:505px;top:1315px" width="32" height="32" viewBox="0 0 32 32"><path d="M16 1 L31 16 L16 31 L1 16 Z" fill="#a8a8d8" stroke="#222" stroke-width="2"/></svg>
<div class="t blk" style="left:545px;top:1321px;">定型区</div>
<svg style="left:626px;top:1322px" width="20" height="20" viewBox="0 0 20 20"><g fill="none" stroke="#9a9a9a" stroke-width="2"><path d="M2 2 L17 17 M17 2 L2 17"/><path d="M1 1 L6 1 M13 1 L18 1 M1 18 L6 18 M13 18 L18 18" stroke="#c0c0c0"/></g></svg>
</body></html>
